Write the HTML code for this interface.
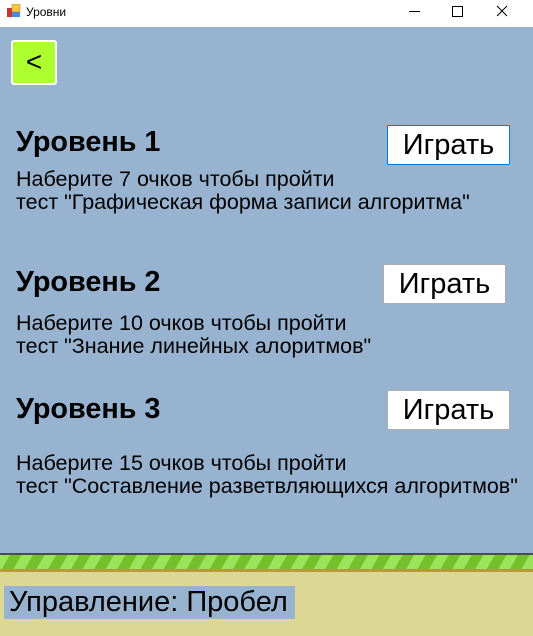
<!DOCTYPE html><html><head><meta charset="utf-8"><style>
body{margin:0;width:533px;height:636px;overflow:hidden;background:#97b3d0;font-family:"Liberation Sans","DejaVu Sans",sans-serif;position:relative}
.a{position:absolute}
.t{background:#fff;left:0;top:0;width:533px;height:27px}
.h{font-weight:bold;font-size:28.8px;color:#000}
.d{font-size:21.5px;line-height:23px;color:#000;white-space:nowrap}
.b{background:#fff;border:1px solid #adadad;width:121px;height:38px;font-size:29px;text-align:center;line-height:38px;border-radius:2px}
</style></head><body>
<div class="a t"></div>
<svg class="a" style="left:7px;top:4px" width="14" height="14"><rect x="0" y="4" width="6" height="9" fill="#c33"/><rect x="5" y="0" width="8" height="8" fill="#f5c542" stroke="#a80" stroke-width=".5"/><rect x="5" y="8" width="8" height="5" fill="#4a8ae0"/></svg>
<div class="a" style="left:26px;top:5px;font-size:12px">Уровни</div>
<div class="a" style="left:409px;top:11px;width:11px;height:1px;background:#000"></div>
<div class="a" style="left:452px;top:6px;width:9px;height:9px;border:1px solid #000"></div>
<svg class="a" style="left:496px;top:5px" width="12" height="12"><path d="M1 1L11 11M11 1L1 11" stroke="#000" stroke-width="1"/></svg>
<div class="a" style="left:11px;top:40px;width:46px;height:45px;background:#adff2f;border:2px solid #fff;border-radius:3px;box-sizing:border-box;font-size:28px;text-align:center;line-height:40px">&lt;</div>
<div class="a h" style="left:16px;top:126px">Уровень 1</div>
<div class="a d" style="left:16px;top:168px">Наберите 7 очков чтобы пройти<br>тест "Графическая форма записи алгоритма"</div>
<div class="a b" style="left:387px;top:125px;border-color:#0078d7">Играть</div>
<div class="a h" style="left:16px;top:266px">Уровень 2</div>
<div class="a d" style="left:16px;top:312px">Наберите 10 очков чтобы пройти<br>тест "Знание линейных алоритмов"</div>
<div class="a b" style="left:383px;top:264px">Играть</div>
<div class="a h" style="left:16px;top:393px">Уровень 3</div>
<div class="a d" style="left:16px;top:452px">Наберите 15 очков чтобы пройти<br>тест "Составление разветвляющихся алгоритмов"</div>
<div class="a b" style="left:387px;top:390px">Играть</div>
<div class="a" style="left:0;top:553px;width:533px;height:2px;background:#4a4a5a"></div>
<div class="a" style="left:0;top:555px;width:533px;height:14px;background:repeating-linear-gradient(-60deg,#9be35a 0 10px,#72c02c 10px 20px)"></div>
<div class="a" style="left:0;top:569px;width:533px;height:3px;background:#b89a3a"></div>
<div class="a" style="left:0;top:572px;width:533px;height:64px;background:#dcd794"></div>
<div class="a" style="left:4px;top:586px;width:291px;height:33px;background:#97b3d0;font-size:29px;line-height:33px;padding-left:5px;box-sizing:border-box;white-space:nowrap">Управление: Пробел</div>
</body></html>
